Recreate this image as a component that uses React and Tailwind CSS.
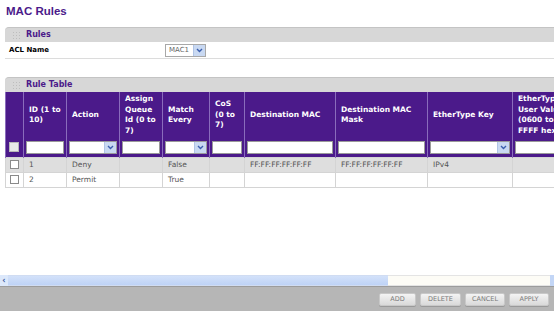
import React from "react";

const purple = "bg-[#4b1a8a]";

// small fake dropdown arrow box
function Arrow() {
  return (
    <span className="flex h-full w-[12px] items-center justify-center bg-[#c9d9f2] border-l border-[#b0c4e6]">
      <svg width="7" height="5" viewBox="0 0 7 5">
        <path d="M1 1 L3.5 3.5 L6 1" stroke="#3b5fae" strokeWidth="1.4" fill="none" />
      </svg>
    </span>
  );
}

function FilterInput({ select }) {
  return (
    <div className="flex h-[13px] w-full items-stretch justify-end border border-[#9a9a9a] bg-white">
      {select && <Arrow />}
    </div>
  );
}

function Grip() {
  return (
    <svg width="7" height="7" viewBox="0 0 7 7" className="mr-[6px]">
      {[0, 3, 6].map((x) =>
        [0, 3, 6].map((y) => <rect key={x + "-" + y} x={x} y={y} width="1" height="1" fill="#bdbdbd" />)
      )}
    </svg>
  );
}

function SectionBar({ title }) {
  return (
    <div className="flex h-[15px] items-center rounded-tl-[4px] border-t border-[#c4c4c4] bg-[#d7d7d7] pl-[8px] text-[8px] font-bold text-[#4b1a8a]">
      <Grip />
      {title}
    </div>
  );
}

const columns = [
  { w: "w-[18px]", label: "", filter: "check" },
  { w: "w-[43px]", label: "ID (1 to 10)", filter: "input" },
  { w: "w-[53px]", label: "Action", filter: "select" },
  { w: "w-[43px]", label: "Assign Queue Id (0 to 7)", filter: "input" },
  { w: "w-[47px]", label: "Match Every", filter: "select" },
  { w: "w-[35px]", label: "CoS (0 to 7)", filter: "input" },
  { w: "w-[91px]", label: "Destination MAC", filter: "input" },
  { w: "w-[92px]", label: "Destination MAC Mask", filter: "input" },
  { w: "w-[85px]", label: "EtherType Key", filter: "select" },
  { w: "w-[80px]", label: "EtherType\nUser Value\n(0600 to\nFFFF hex)", filter: "input" },
];

const rows = [
  ["1", "Deny", "", "False", "", "FF:FF:FF:FF:FF:FF", "FF:FF:FF:FF:FF:FF", "IPv4", ""],
  ["2", "Permit", "", "True", "", "", "", "", ""],
];

function Button({ children, w }) {
  return (
    <button
      className={`${w} h-[13px] rounded-[2px] border border-[#c8c8c8] bg-gradient-to-b from-[#f4f4f4] to-[#d9d9d9] text-[6.5px] leading-none text-[#7a7a7a] shadow-[0_1px_0_#9a9a9a]`}
    >
      {children}
    </button>
  );
}

export default function App() {
  return (
    <div className="flex h-[311px] w-[554px] flex-col overflow-hidden bg-white font-['DejaVu_Sans',sans-serif]">
      {/* title */}
      <div className="h-[27px] pl-[6px] pt-[3px] font-['Liberation_Sans',sans-serif] text-[11.5px] font-bold text-[#4b1a8a]">
        MAC Rules
      </div>

      {/* Rules */}
      <div className="ml-[5px]">
        <SectionBar title="Rules" />
        <div className="flex h-[17px] items-center border-b border-[#dcdcdc] pl-[4px]">
          <span className="w-[156px] text-[7px] font-bold text-black">ACL Name</span>
          <div className="flex h-[13px] w-[41px] items-stretch border border-[#a8a8a8] bg-white">
            <span className="flex flex-1 items-center pl-[3px] text-[7px] text-[#666]">MAC1</span>
            <Arrow />
          </div>
        </div>
      </div>

      <div className="h-[18px]" />

      {/* Rule Table */}
      <div className="ml-[5px] flex-1 overflow-hidden">
        <SectionBar title="Rule Table" />
        <table className="w-[587px] min-w-[587px] table-fixed border-collapse">
          <colgroup>
            {columns.map((c, i) => (
              <col key={i} className={c.w} />
            ))}
          </colgroup>
          <thead>
            <tr className={`h-[46px] ${purple}`}>
              {columns.map((c, i) => (
                <th
                  key={i}
                  className="whitespace-pre-line border-x border-[#8a6cbc] px-[5px] text-left align-middle text-[7.5px] font-bold leading-[10.5px] text-white"
                >
                  {c.label}
                </th>
              ))}
            </tr>
            <tr className={`h-[19px] ${purple}`}>
              {columns.map((c, i) => (
                <th key={i} className="border-x border-[#8a6cbc] px-[2px] align-middle">
                  {c.filter === "check" ? (
                    <div className="ml-[1px] h-[10px] w-[10px] border border-[#b8b8b8] bg-[#e9e9e9]" />
                  ) : (
                    <FilterInput select={c.filter === "select"} />
                  )}
                </th>
              ))}
            </tr>
          </thead>
          <tbody>
            {rows.map((r, ri) => (
              <tr key={ri} className={`h-[15px] ${ri === 0 ? "bg-[#dedede]" : "bg-white"}`}>
                <td className="border border-[#d4d4d4] pl-[4px]">
                  <div className="h-[9px] w-[9px] border border-[#8a8a8a] bg-white" />
                </td>
                {r.map((v, i) => (
                  <td key={i} className="border border-[#d4d4d4] pl-[5px] text-[7.5px] text-[#555]">
                    {v}
                  </td>
                ))}
              </tr>
            ))}
          </tbody>
        </table>
      </div>

      {/* horizontal scrollbar */}
      <div className="flex h-[11px] items-stretch">
        <div className="flex w-[8px] items-center justify-center bg-[#dce8fb] text-[8px] font-bold leading-none text-[#3a5a9a]">
          ‹
        </div>
        <div className="w-[380px] border-y border-[#d0dcf2] bg-gradient-to-b from-[#d3e1fa] to-[#bed3f6]" />
        <div className="flex-1 border-y border-[#e4e4e4] bg-[#fdfcf6]" />
        <div className="w-[4px] bg-[#c3d6f6]" />
      </div>

      {/* bottom bar */}
      <div className="flex h-[25px] items-center justify-end gap-[4px] border-t border-[#9c9c9c] bg-[#b6b6b6] pr-[5px] pt-[1px]">
        <Button w="w-[37px]">ADD</Button>
        <Button w="w-[41px]">DELETE</Button>
        <Button w="w-[40px]">CANCEL</Button>
        <Button w="w-[40px]">APPLY</Button>
      </div>
    </div>
  );
}
